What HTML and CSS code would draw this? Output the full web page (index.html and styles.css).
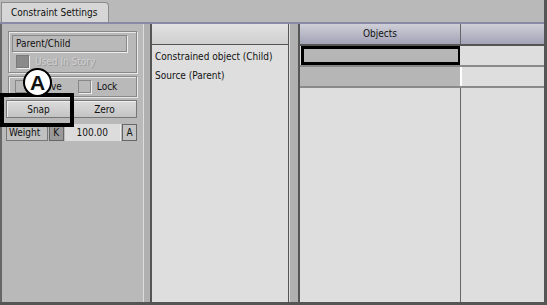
FILE: index.html
```html
<!DOCTYPE html>
<html>
    <head>
        <meta charset="UTF-8">
        <title>Constraint Settings</title>
        <link rel="stylesheet" href="styles.css">
    </head>
    <body>
        <div class="window">
            <div class="tab-bar">
                <div class="tab">Constraint Settings</div>
            </div>
            <div class="panes">
                <!-- painel de controles -->
                <div class="left-pane">
                    <div class="group group-top">
                        <div class="field">Parent/Child</div>
                        <div class="check disabled"><span class="box filled"></span>Used In Story</div>
                    </div>
                    <div class="group group-checks">
                        <div class="check"><span class="box"></span>Active</div>
                        <div class="check"><span class="box"></span>Lock</div>
                    </div>
                    <div class="button-row">
                        <div class="btn">Snap</div>
                        <div class="btn">Zero</div>
                    </div>
                    <div class="weight-row">
                        <div class="label-box">Weight</div>
                        <div class="small-btn dark">K</div>
                        <div class="value">100.00</div>
                        <div class="small-btn">A</div>
                    </div>
                    <div class="callout-box"></div>
                    <div class="callout">A</div>
                </div>
                <div class="splitter"></div>
                <div class="mid-pane">
                    <div class="header"></div>
                    <div class="mid-row">Constrained object (Child)</div>
                    <div class="mid-row">Source (Parent)</div>
                </div>
                <div class="splitter wide"></div>
                <div class="right-pane">
                    <div class="grid-header">
                        <div class="col-a">Objects</div>
                        <div class="col-b"></div>
                    </div>
                    <div class="grid-row">
                        <div class="col-a cell selected"></div>
                        <div class="col-b"></div>
                    </div>
                    <div class="grid-row">
                        <div class="col-a cell"></div>
                        <div class="col-b"></div>
                    </div>
                    <div class="grid-rest">
                        <div class="col-a"></div>
                        <div class="col-b"></div>
                    </div>
                </div>
            </div>
        </div>
    </body>
</html>
```
FILE: styles.css
```css
body {
    margin: 0;
    font-family: "DejaVu Sans Condensed", "DejaVu Sans", sans-serif;
    font-size: 10px;
    color: #111;
}
.window {
    width: 547px;
    height: 305px;
    display: flex;
    flex-direction: column;
    background: #b9b9b9;
    box-sizing: border-box;
    border-right: 3px solid #555;
    border-bottom: 3px solid #555;
}
.tab-bar {
    height: 22px;
    display: flex;
    align-items: flex-end;
    padding-left: 1px;
    flex-shrink: 0;
}
.tab {
    width: 108px;
    height: 20px;
    box-sizing: border-box;
    background: #d6d6d6;
    border: 1px solid #8c8c8c;
    border-bottom: none;
    border-top-right-radius: 4px;
    padding: 4px 0 0 9px;
}
.panes {
    flex: 1;
    display: flex;
    border-top: 2px solid #8a8aa6;
    min-height: 0;
}
.left-pane {
    width: 143px;
    position: relative;
    box-sizing: border-box;
    border-left: 2px solid #666;
    padding: 7px 6px 0 3px;
    background: #b9b9b9;
}
.group {
    border: 1px solid #888;
    box-shadow: 1px 1px 0 #e8e8e8, inset 1px 1px 0 #e8e8e8;
    margin-left: 3px;
}
.group-top {
    height: 42px;
    padding: 3px 9px 0 3px;
    box-sizing: border-box;
}
.field {
    height: 17px;
    border: 1px solid #888;
    box-shadow: 1px 1px 0 #eee;
    padding: 2px 3px;
    box-sizing: border-box;
}
.check {
    display: flex;
    align-items: center;
    gap: 6px;
    height: 19px;
    padding-left: 4px;
}
.disabled {
    color: #d0d0d0;
    text-shadow: 1px 1px 0 #9a9a9a;
}
.box {
    width: 11px;
    height: 11px;
    border: 1px solid #888;
    box-shadow: 1px 1px 0 #eee;
    display: inline-block;
}
.box.filled {
    background: #8a8a8a;
    border-color: #7a7a7a;
}
.group-checks {
    margin-top: 3px;
    height: 21px;
    display: flex;
    gap: 12px;
    box-sizing: border-box;
    padding-left: 2px;
}
.button-row {
    display: flex;
    margin-top: 3px;
    gap: 1px;
    padding-left: 1px;
}
.btn {
    flex: 1;
    height: 18px;
    line-height: 17px;
    text-align: center;
    box-sizing: border-box;
    border: 1px solid #777;
    box-shadow: inset 1px 1px 0 #eee;
    background: linear-gradient(#dcdcdc, #c4c4c4);
}
.weight-row {
    display: flex;
    margin-top: 6px;
    height: 17px;
    gap: 1px;
    padding-left: 1px;
}
.label-box {
    width: 42px;
    border: 1px solid #777;
    box-sizing: border-box;
    padding-left: 2px;
    line-height: 15px;
    background: #c0c0c0;
}
.small-btn {
    width: 15px;
    border: 1px solid #666;
    box-sizing: border-box;
    text-align: center;
    line-height: 15px;
    background: #c4c4c4;
}
.small-btn.dark {
    background: #9a9a9a;
}
.value {
    width: 56px;
    background: #dcdcdc;
    border-right: 1px solid #eee;
    text-align: center;
    line-height: 17px;
}
.callout-box {
    position: absolute;
    left: -2px;
    top: 69px;
    width: 74px;
    height: 34px;
    border: 4px solid #000;
    box-sizing: border-box;
}
.callout {
    position: absolute;
    left: 21px;
    top: 44px;
    width: 29px;
    height: 29px;
    border: 2px solid #000;
    border-radius: 50%;
    background: #fff;
    box-sizing: border-box;
    text-align: center;
    font: bold 21px/26px "Liberation Sans", sans-serif;
}
.splitter {
    width: 9px;
    background: #b0b0b0;
    border-left: 1px solid #dedede;
    border-right: 2px solid #555;
    box-sizing: border-box;
}
.splitter.wide {
    width: 11px;
}
.mid-pane {
    width: 137px;
    background: #dedede;
    border-right: 1px solid #555;
    box-sizing: border-box;
}
.header {
    height: 20px;
    background: linear-gradient(#e2e2e2, #cfcfcf);
    border-bottom: 1px solid #555;
}
.mid-row {
    height: 19px;
    line-height: 19px;
    padding-left: 3px;
}
.header + .mid-row {
    margin-top: 2px;
}
.right-pane {
    flex: 1;
    display: flex;
    flex-direction: column;
    background: #dedede;
}
.grid-header, .grid-row, .grid-rest {
    display: flex;
}
.col-a {
    width: 160px;
    border-right: 1px solid #666;
}
.col-b {
    flex: 1;
}
.grid-header {
    height: 22px;
    background: linear-gradient(#cfcfd8, #a3a3b8);
    border-bottom: 2px solid #555;
    box-sizing: border-box;
}
.grid-header .col-a {
    text-align: center;
    line-height: 20px;
}
.grid-row {
    height: 19px;
    border-bottom: 2px solid #8a8a8a;
}
.cell {
    background: #b6b6b6;
    border-right: 2px solid #fff;
}
.cell.selected {
    border: 3px solid #000;
    margin: 0 0 0 1px;
    width: 159px;
    box-sizing: border-box;
    border-right-width: 2px;
}
.grid-rest {
    flex: 1;
}
```
